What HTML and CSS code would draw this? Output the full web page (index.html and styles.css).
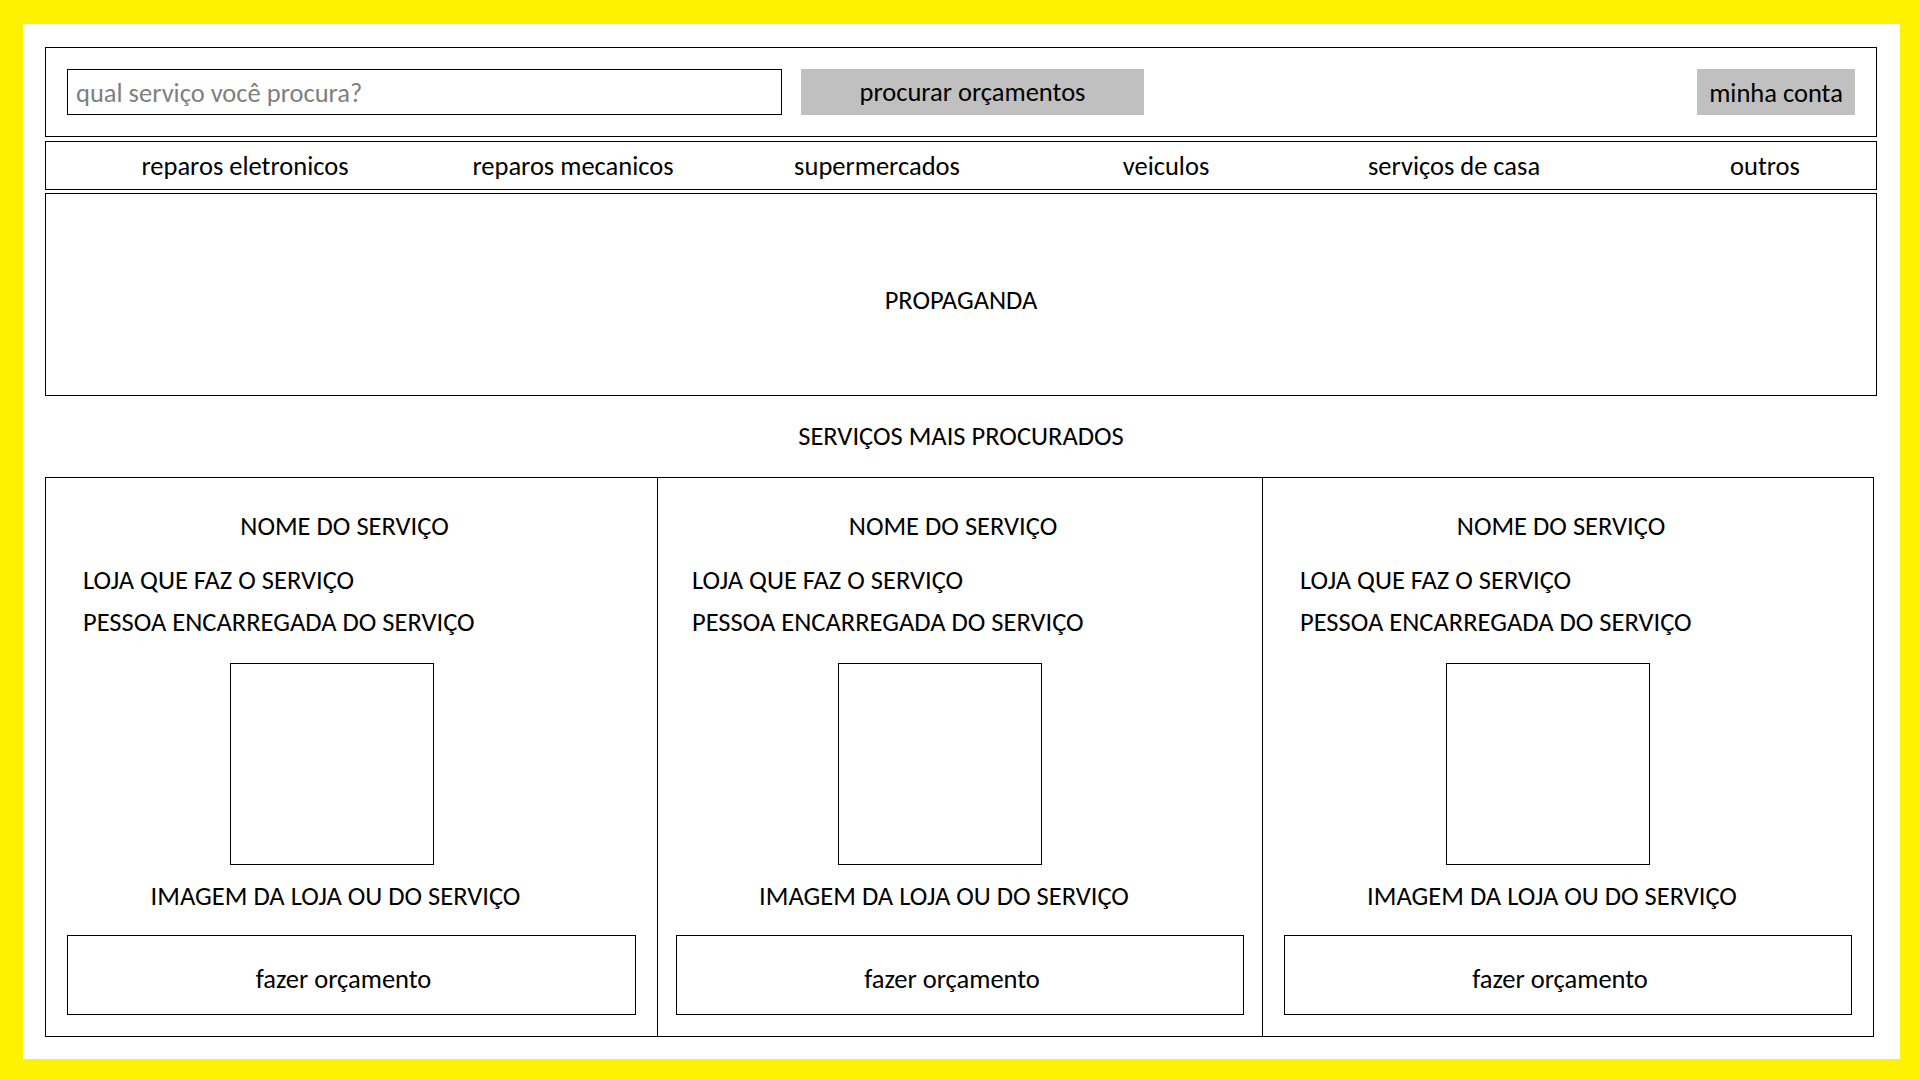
FILE: index.html
```html
<!DOCTYPE html>
<html lang="pt-BR">
<head>
<meta charset="utf-8">
<title>Orçamentos</title>
<link rel="stylesheet" href="styles.css">
</head>
<body>
<div class="page">
  <header class="header">
    <input class="search" type="text" placeholder="qual serviço você procura?">
    <button class="btn btn-search">procurar orçamentos</button>
    <button class="btn btn-account">minha conta</button>
  </header>
  <nav class="nav">
    <a class="nav-item">reparos eletronicos</a>
    <a class="nav-item">reparos mecanicos</a>
    <a class="nav-item">supermercados</a>
    <a class="nav-item">veiculos</a>
    <a class="nav-item">serviços de casa</a>
    <a class="nav-item nav-last">outros</a>
  </nav>
  <section class="banner">PROPAGANDA</section>
  <h2 class="section-title">SERVIÇOS MAIS PROCURADOS</h2>
  <section class="cards">
    <article class="card">
      <div class="card-name">NOME DO SERVIÇO</div>
      <div class="card-store">LOJA QUE FAZ O SERVIÇO</div>
      <div class="card-person">PESSOA ENCARREGADA DO SERVIÇO</div>
      <div class="card-image"></div>
      <div class="card-caption">IMAGEM DA LOJA OU DO SERVIÇO</div>
      <button class="card-btn">fazer orçamento</button>
    </article>
    <article class="card card-mid">
      <div class="card-name">NOME DO SERVIÇO</div>
      <div class="card-store">LOJA QUE FAZ O SERVIÇO</div>
      <div class="card-person">PESSOA ENCARREGADA DO SERVIÇO</div>
      <div class="card-image"></div>
      <div class="card-caption">IMAGEM DA LOJA OU DO SERVIÇO</div>
      <button class="card-btn">fazer orçamento</button>
    </article>
    <article class="card">
      <div class="card-name">NOME DO SERVIÇO</div>
      <div class="card-store">LOJA QUE FAZ O SERVIÇO</div>
      <div class="card-person">PESSOA ENCARREGADA DO SERVIÇO</div>
      <div class="card-image"></div>
      <div class="card-caption">IMAGEM DA LOJA OU DO SERVIÇO</div>
      <button class="card-btn">fazer orçamento</button>
    </article>
  </section>
</div>
</body>
</html>
```

FILE: styles.css
```css
* { box-sizing: border-box; }

html, body { height: 100%; }

body {
  margin: 0;
  background: #fff200;
  padding: 24px 20px 21px 23px;
  font-family: Carlito, Lato, "Open Sans", sans-serif;
  font-size: 26.5px;
  color: #000;
}

.page {
  background: #fff;
  height: 1035px;
  padding: 23px 23px 0 22px;
  display: flex;
  flex-direction: column;
}

/* header */
.header {
  height: 90px;
  border: 1px solid #000;
  display: flex;
  align-items: center;
  padding: 0 21px;
}

.search {
  width: 715px;
  height: 46px;
  border: 1px solid #000;
  padding: 2px 8px 0;
  font: inherit;
  color: #000;
  outline: none;
}
.search::placeholder { color: #7f7f7f; }

.btn {
  height: 46px;
  border: none;
  background: #c0c0c0;
  font: inherit;
  color: #000;
  padding: 0;
}
.btn-search { width: 343px; margin-left: 19px; }
.btn-account { width: 158px; margin-left: auto; padding-top: 2px; }

/* nav */
.nav {
  margin-top: 4px;
  height: 49px;
  border: 1px solid #000;
  display: grid;
  grid-template-columns: 398px 258px 350px 228px 348px 1fr;
  align-items: center;
}
.nav-item { text-align: center; white-space: nowrap; }
.nav-last { padding-left: 26px; }

/* banner */
.banner {
  margin-top: 3px;
  height: 203px;
  border: 1px solid #000;
  display: flex;
  align-items: center;
  justify-content: center;
  padding-top: 10px;
}

.section-title {
  margin: 0;
  height: 81px;
  line-height: 81px;
  font-size: inherit;
  font-weight: normal;
  text-align: center;
}

/* cards */
.cards {
  width: 1829px;
  border: 1px solid #000;
  display: grid;
  grid-template-columns: 611px 605px 1fr;
}

.card {
  display: flex;
  flex-direction: column;
  padding: 31px 21px 21px;
  line-height: 34px;
}
.card + .card { border-left: 1px solid #000; }
.card-mid { padding-left: 18px; padding-right: 18px; }

.card-name { text-align: center; padding-right: 14px; }
.card-store { margin-top: 20px; padding-left: 16px; }
.card-person { margin-top: 8px; padding-left: 16px; }

.card-image {
  margin-top: 24px;
  width: 204px;
  height: 202px;
  border: 1px solid #000;
  align-self: center;
  margin-right: 40px;
}

.card-caption { margin-top: 14px; text-align: center; padding-right: 32px; }

.card-btn {
  margin-top: 22px;
  height: 80px;
  border: 1px solid #000;
  background: #fff;
  font: inherit;
  color: #000;
  padding: 8px 16px 0 0;
}
```
